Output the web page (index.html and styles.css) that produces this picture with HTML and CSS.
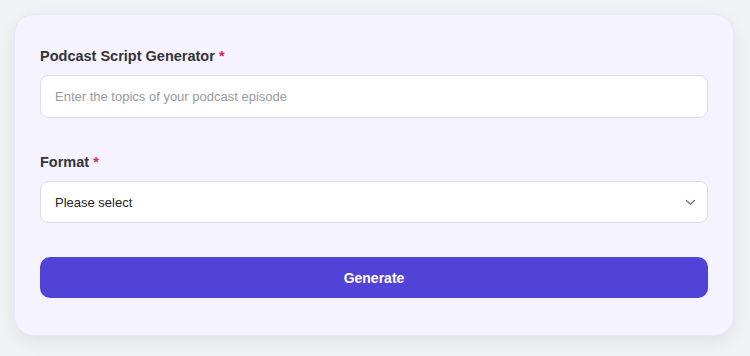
FILE: index.html
```html
<!DOCTYPE html>
<html lang="en">
<head>
<meta charset="utf-8">
<title>Podcast Script Generator</title>
<link rel="stylesheet" href="styles.css">
</head>
<body>
<div class="card">
  <div class="field">
    <label class="label" for="topics">Podcast Script Generator <span class="req">*</span></label>
    <input class="input" id="topics" type="text" placeholder="Enter the topics of your podcast episode">
  </div>
  <div class="field">
    <label class="label" for="format">Format <span class="req">*</span></label>
    <div class="select">
      <span class="select-text">Please select</span>
      <svg class="chevron" width="11" height="7" viewBox="0 0 11 7" aria-hidden="true"><path d="M1.5 1.5 L5.5 5.3 L9.5 1.5" fill="none" stroke="#75757d" stroke-width="1.3" stroke-linecap="round" stroke-linejoin="round"/></svg>
    </div>
  </div>
  <button class="btn" type="button">Generate</button>
</div>
</body>
</html>
```

FILE: styles.css
```css
html, body {
  margin: 0;
  padding: 0;
}
body {
  background: #f1f2f4;
  font-family: "Liberation Sans", Arial, sans-serif;
  width: 750px;
  height: 356px;
  overflow: hidden;
  padding: 14px;
  box-sizing: border-box;
}
.card {
  width: 720px;
  height: 322px;
  box-sizing: border-box;
  background: #f5f3ff;
  border: 1px solid #ebe8f5;
  border-radius: 20px;
  box-shadow: 0 6px 18px rgba(20, 20, 40, 0.07);
  padding: 31px 25px 0 25px;
  display: flex;
  flex-direction: column;
}
.field {
  display: flex;
  flex-direction: column;
  margin-bottom: 34px;
}
.label {
  font-size: 14.5px;
  line-height: 20px;
  font-weight: 700;
  color: #333338;
  margin-bottom: 9px;
}
.req {
  color: #e0245e;
}
.input {
  height: 43px;
  box-sizing: border-box;
  border: 1px solid #dedbe8;
  border-radius: 8px;
  background: #ffffff;
  padding: 0 14px;
  font-family: inherit;
  font-size: 13px;
  color: #333;
  outline: none;
}
.input::placeholder {
  color: #9a9aa2;
}
.select {
  height: 42px;
  box-sizing: border-box;
  border: 1px solid #dedbe8;
  border-radius: 8px;
  background: #ffffff;
  padding: 0 11px 0 14px;
  display: flex;
  align-items: center;
  justify-content: space-between;
}
.select-text {
  font-size: 13px;
  color: #1f1f24;
}
.chevron {
  display: block;
}
.btn {
  height: 41px;
  border: 0;
  border-radius: 10px;
  background: #5243d8;
  color: #ffffff;
  font-family: inherit;
  font-size: 14px;
  font-weight: 700;
}
```
